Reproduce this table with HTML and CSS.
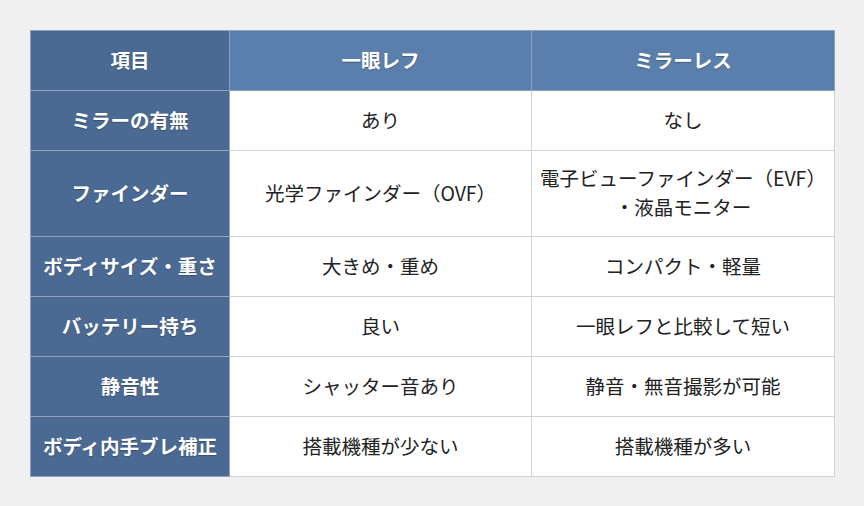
FILE: index.html
```html
<!DOCTYPE html>
<html lang="ja">
<head>
<meta charset="utf-8">
<link rel="stylesheet" href="styles.css">
</head>
<body>
<div class="wrap">
<table class="cmp">
<colgroup><col class="c1"><col class="c2"><col class="c3"></colgroup>
<thead>
<tr><th class="head-key">項目</th><th>一眼レフ</th><th>ミラーレス</th></tr>
</thead>
<tbody>
<tr><th>ミラーの有無</th><td>あり</td><td>なし</td></tr>
<tr><th>ファインダー</th><td>光学ファインダー（OVF）</td><td>電子ビューファインダー（EVF）<br>・液晶モニター</td></tr>
<tr><th>ボディサイズ・重さ</th><td>大きめ・重め</td><td>コンパクト・軽量</td></tr>
<tr><th>バッテリー持ち</th><td>良い</td><td>一眼レフと比較して短い</td></tr>
<tr><th>静音性</th><td>シャッター音あり</td><td>静音・無音撮影が可能</td></tr>
<tr><th>ボディ内手ブレ補正</th><td>搭載機種が少ない</td><td>搭載機種が多い</td></tr>
</tbody>
</table>
</div>
</body>
</html>
```
FILE: styles.css
```css
html, body {
  margin: 0;
  padding: 0;
  background: #f0f0f0;
}
.wrap {
  padding: 30px;
}
.cmp {
  width: 804px;
  border-collapse: collapse;
  table-layout: fixed;
  font-family: "Noto Sans CJK JP", "Noto Sans", sans-serif;
  font-size: 19.5px;
  line-height: 29px;
  background: #fff;
}
.c1 { width: 199px; }
.c2 { width: 302px; }
.c3 { width: 303px; }
.cmp tr {
  height: 60px;
}
.cmp th, .cmp td {
  border: 1px solid #d2d2d2;
  padding: 12px 4px 15px;
  text-align: center;
  vertical-align: middle;
}
.cmp td {
  color: #222;
  font-weight: 400;
}
.cmp th {
  color: #fff;
  font-weight: 700;
  background: #4b6a93;
  border-color: #8ea3bd;
  text-shadow: 0 1px 1px rgba(0, 0, 0, 0.25);
}
.cmp thead th {
  background: #5b7fac;
}
.cmp thead th.head-key,
.cmp tbody th {
  background: #4b6a93;
}
```
